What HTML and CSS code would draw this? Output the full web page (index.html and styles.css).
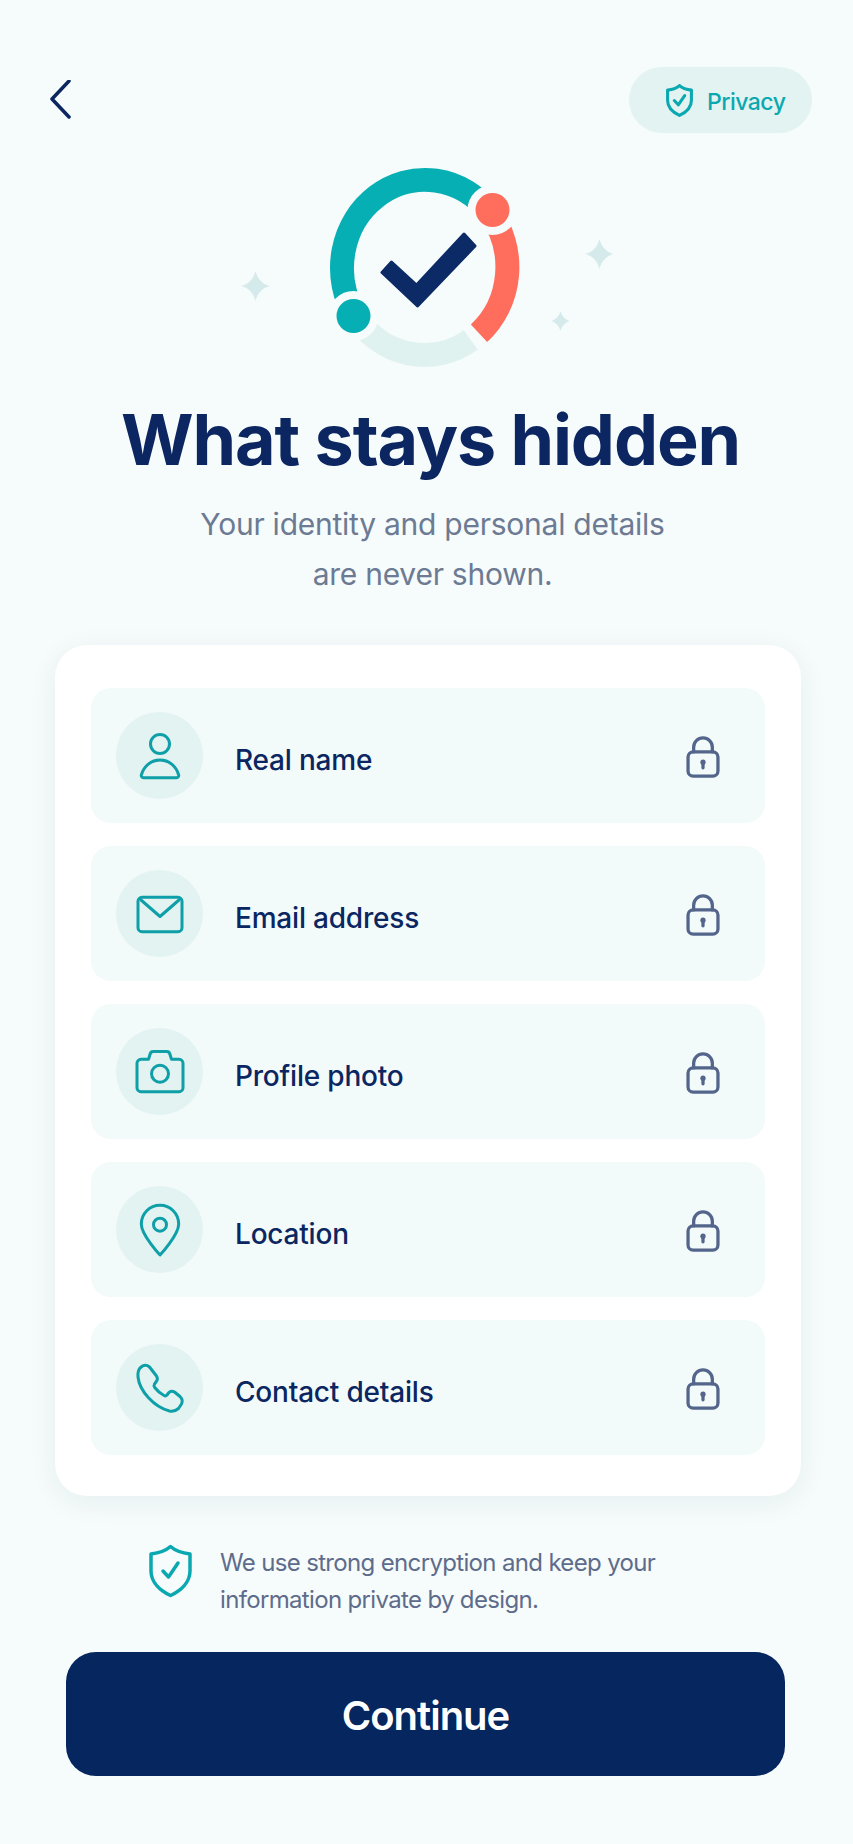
FILE: index.html
```html
<!DOCTYPE html>
<html lang="en">
<head>
    <meta charset="UTF-8">
    <meta name="viewport" content="width=device-width, initial-scale=1.0">
    <title>What stays hidden</title>
    <link rel="stylesheet" href="styles.css">
</head>
<body>
    <!-- Top bar -->
    <div class="top-bar">
        <svg class="back-icon" width="22" height="40" viewBox="0 0 22 40">
            <path d="M20 1 L3 19 L20 37"/>
        </svg>
        <div class="privacy-pill">
            <svg class="shield" width="29" height="33" viewBox="0 0 45 54">
                <path d="M22.5 2.5 C27 6.5 34 9 42 10 V27 C42 38 33 46.500 22.500 51.500 C12 46.500 3 38 3 27 V10 C11 9 18 6.500 22.500 2.500Z"/>
                <path d="M14 27 L20.500 34 L31 19"/>
            </svg>
            <span>Privacy</span>
        </div>
    </div>

    <!-- Hero graphic -->
    <svg class="hero" width="400" height="212" viewBox="226.5 160 400 212">
        <path class="arc arc-teal" d="M489 212.500 A83 88 0 0 0 354.400 315"/>
        <path class="arc arc-coral" d="M489 212.500 A83 88 0 0 1 478.500 333.300"/>
        <path class="arc arc-pale" d="M354.400 315 A83 88 0 0 0 470.300 339.900"/>
        <circle class="dot dot-coral" cx="492" cy="210" r="17"/>
        <circle class="dot dot-teal" cx="353" cy="316" r="17"/>
        <path class="check" d="M391 262 L416 285 L463.500 234 L474.500 246 L417 306 L381.500 272.500Z"/>
        <path class="spark" d="M255 271 C257 279 262 284 269 286 C262 288 257 293 255 301 C253 293 248 288 241 286 C248 284 253 279 255 271Z"/>
        <path class="spark" d="M599 239 C601 247 606 252 613 254 C606 256 601 261 599 269 C597 261 592 256 585 254 C592 252 597 247 599 239Z"/>
        <path class="spark" d="M560 311 C561.500 316 564 319 569 321 C564 323 561.500 326 560 331 C558.500 326 556 323 551 321 C556 319 558.500 316 560 311Z"/>
    </svg>

    <h1 class="title">What stays hidden</h1>
    <p class="subtitle">Your identity and personal details<br>are never shown.</p>

    <!-- Hidden items -->
    <div class="card">
        <div class="row">
            <div class="row-icon">
                <svg width="56" height="56" viewBox="0 0 56 56">
                    <circle cx="28" cy="16" r="9.500"/>
                    <path d="M11.500 49.700 H44.500 A2.200 2.200 0 0 0 46.600 46.700 C44 38 37 32 28 32 S12 38 9.400 46.700 A2.200 2.200 0 0 0 11.500 49.700Z"/>
                </svg>
            </div>
            <span class="row-label">Real name</span>
            <svg class="lock" width="34" height="43" viewBox="0 0 36 46"><use href="#lock-shape"/></svg>
        </div>
        <div class="row">
            <div class="row-icon">
                <svg width="56" height="56" viewBox="0 0 56 56">
                    <rect x="6" y="11.300" width="44" height="34.400" rx="4"/>
                    <path d="M9 14 L28 30.500 L47 14"/>
                </svg>
            </div>
            <span class="row-label">Email address</span>
            <svg class="lock" width="34" height="43" viewBox="0 0 36 46"><use href="#lock-shape"/></svg>
        </div>
        <div class="row">
            <div class="row-icon">
                <svg width="56" height="56" viewBox="0 0 56 56">
                    <path d="M9 15.300 H16.500 L18 10.500 A3.500 3.500 0 0 1 21.300 7.600 H34.700 A3.500 3.500 0 0 1 38 10.500 L39.500 15.300 H47 A4 4 0 0 1 51 19.300 V43.700 A4 4 0 0 1 47 47.700 H9 A4 4 0 0 1 5 43.700 V19.300 A4 4 0 0 1 9 15.300Z"/>
                    <circle cx="28" cy="29.700" r="8.500"/>
                </svg>
            </div>
            <span class="row-label">Profile photo</span>
            <svg class="lock" width="34" height="43" viewBox="0 0 36 46"><use href="#lock-shape"/></svg>
        </div>
        <div class="row">
            <div class="row-icon">
                <svg width="56" height="56" viewBox="0 0 56 56">
                    <path d="M28 53 C28 53 9.300 33 9.300 22 A18.700 18.700 0 0 1 46.700 22 C46.700 33 28 53 28 53Z"/>
                    <circle cx="28" cy="22.700" r="6.500"/>
                </svg>
            </div>
            <span class="row-label">Location</span>
            <svg class="lock" width="34" height="43" viewBox="0 0 36 46"><use href="#lock-shape"/></svg>
        </div>
        <div class="row">
            <div class="row-icon">
                <svg width="56" height="56" viewBox="0 0 56 56">
                    <path d="M8 8 L10.500 6 Q14 4 17.500 7 L24.500 16 Q26.500 19 24 22 L22.500 24 Q21.500 25.500 22.700 27.500 Q27 33 32 35.500 Q33.700 36.400 35 35 L36.500 33 Q39 30 42.500 32 L48 36.500 Q51.500 40 49.500 44 L46.500 48.500 Q42.500 52 37.500 51 C22 47 7.500 31 6 17 Q5.500 11 8 8Z"/>
                </svg>
            </div>
            <span class="row-label">Contact details</span>
            <svg class="lock" width="34" height="43" viewBox="0 0 36 46"><use href="#lock-shape"/></svg>
        </div>
    </div>

    <!-- Encryption note -->
    <div class="note">
        <svg class="shield" width="45" height="54" viewBox="0 0 45 54">
            <path d="M22.500 2.500 C27 6.500 34 9 42 10 V27 C42 38 33 46.500 22.500 51.500 C12 46.500 3 38 3 27 V10 C11 9 18 6.500 22.500 2.500Z"/>
            <path d="M15 27 L20.500 33 L30 19"/>
        </svg>
        <p>We use strong encryption and keep your<br>information private by design.</p>
    </div>

    <button class="continue">Continue</button>

    <!-- Shared lock drawing -->
    <svg class="defs" width="0" height="0">
        <defs>
            <g id="lock-shape">
                <rect x="2" y="17" width="32" height="26" rx="5.500"/>
                <path d="M8 17 V12 A10 10 0 0 1 28 12 V17"/>
                <circle class="keyhole" cx="18" cy="28" r="2.800"/>
                <path d="M18 28 V34"/>
            </g>
        </defs>
    </svg>
</body>
</html>
```

FILE: styles.css
```css
body {
    margin: 0;
    min-height: 1844px;
    background-color: #f6fbfb;
    font-family: "Inter", "Liberation Sans", sans-serif;
    color: #0b2660;
    display: flex;
    flex-direction: column;
    align-items: center;
    box-sizing: border-box;
}
/* Top bar with back arrow and privacy pill */
.top-bar {
    width: 100%;
    box-sizing: border-box;
    padding: 67px 41px 0 49px;
    display: flex;
    justify-content: space-between;
    align-items: center;
}
.back-icon path {
    fill: none;
    stroke: #0b2660;
    stroke-width: 3.500;
    stroke-linecap: round;
    stroke-linejoin: round;
}
.privacy-pill {
    width: 183px;
    height: 66px;
    box-sizing: border-box;
    padding-left: 36px;
    border-radius: 33px;
    background-color: #e2f3f1;
    color: #0aa8b0;
    font-size: 23px;
    font-weight: 500;
    letter-spacing: -0.5px;
    display: flex;
    align-items: center;
    gap: 13px;
}
.privacy-pill span {
    padding-top: 3px;
}
.shield path {
    fill: none;
    stroke: #0aa8b0;
    stroke-width: 3.500;
    stroke-linecap: round;
    stroke-linejoin: round;
}
.privacy-pill .shield path {
    stroke-width: 5;
}
/* Hero graphic */
.hero {
    margin-top: 27px;
    flex-shrink: 0;
}
.arc {
    fill: none;
    stroke-width: 24;
}
.arc-teal { stroke: #05afb3; }
.arc-coral { stroke: #ff6d5c; }
.arc-pale { stroke: #e0f2f0; }
/* Dots carry a halo in the page colour that cuts the arcs */
.dot {
    stroke: #f6fbfb;
    stroke-width: 16;
    paint-order: stroke;
}
.dot-coral { fill: #ff6d5c; }
.dot-teal { fill: #05afb3; }
.check {
    fill: #0b2a66;
    stroke: #0b2a66;
    stroke-width: 3;
    stroke-linejoin: round;
}
.spark { fill: #d5ebeb; }
/* Heading */
.title {
    margin: 24px 0 0;
    padding-left: 8px;
    font-size: 70px;
    line-height: 88px;
    font-weight: 700;
    letter-spacing: -1.1px;
}
.subtitle {
    margin: 15px 0 0;
    padding-left: 12px;
    font-size: 30px;
    line-height: 50px;
    letter-spacing: -0.25px;
    color: #6c7a93;
    text-align: center;
}
/* Card with the list of hidden items */
.card {
    width: 746px;
    box-sizing: border-box;
    margin: 46px 0 0 3px;
    padding: 43px 36px 41px;
    background-color: #fff;
    border-radius: 32px;
    box-shadow: 0 6px 28px rgba(20, 90, 100, 0.07);
    display: flex;
    flex-direction: column;
    gap: 23px;
}
.row {
    height: 135px;
    box-sizing: border-box;
    padding: 0 45px 0 25px;
    background-color: #f2fafa;
    border-radius: 20px;
    display: flex;
    align-items: center;
    gap: 32px;
}
.row-icon {
    width: 87px;
    height: 87px;
    flex-shrink: 0;
    border-radius: 50%;
    background-color: #e2f3f1;
    display: flex;
    justify-content: center;
    align-items: center;
}
.row-icon svg * {
    fill: none;
    stroke: #0f9fa8;
    stroke-width: 3;
    stroke-linecap: round;
    stroke-linejoin: round;
}
.row-label {
    flex: 1;
    padding-top: 8px;
    font-size: 28px;
    font-weight: 500;
    letter-spacing: -0.2px;
}
.lock {
    margin-top: 4px;
    fill: none;
    stroke: #54658c;
    stroke-width: 3.500;
    stroke-linecap: round;
}
.keyhole {
    fill: #54658c;
    stroke: none;
}
.defs {
    position: absolute;
}
/* Encryption note */
.note {
    width: 100%;
    box-sizing: border-box;
    margin-top: 48px;
    padding-left: 148px;
    display: flex;
    gap: 27px;
}
.note p {
    margin: 0;
    font-size: 24px;
    line-height: 37px;
    letter-spacing: -0.66px;
    color: #5e6c8c;
}
/* Main action */
.continue {
    width: 719px;
    height: 124px;
    margin: 34px 2px 0 0;
    padding-top: 3px;
    border: none;
    border-radius: 30px;
    background-color: #05265e;
    color: #fff;
    font-family: inherit;
    font-size: 40px;
    font-weight: 600;
    letter-spacing: -1px;
    cursor: pointer;
}
```
